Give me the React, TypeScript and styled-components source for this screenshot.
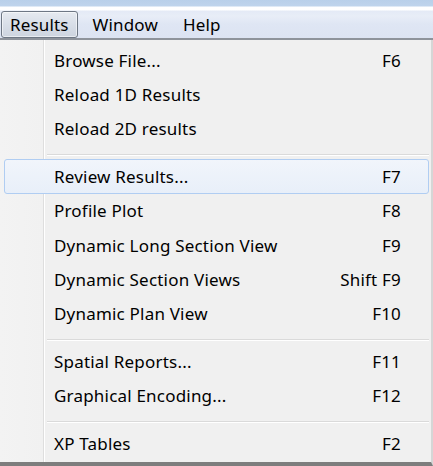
import React from "react";
import styled, { createGlobalStyle } from "styled-components";

const GlobalStyle = createGlobalStyle`
  html, body {
    margin: 0;
    padding: 0;
    background: #f0f0f0;
    overflow: hidden;
  }
  body {
    font-family: "Noto Sans", "Open Sans", "DejaVu Sans", sans-serif;
    color: #000;
  }
`;

const Screen = styled.div`
  width: 433px;
  height: 466px;
  display: flex;
  flex-direction: column;
  overflow: hidden;
  background: #f0f0f0;
`;

const MenuBar = styled.div`
  height: 40px;
  flex: none;
  display: flex;
  align-items: flex-end;
  gap: 5px;
  padding: 0 0 0 1px;
  box-sizing: border-box;
  border-bottom: 2px solid #8e939b;
  background: linear-gradient(
    to bottom,
    #b9d0ea 0px,
    #bfd4ec 6px,
    #ffffff 7px,
    #ffffff 10px,
    #e4eaf6 11px,
    #e8edf7 16px,
    #dfe6f4 24px,
    #dce3f2 38px
  );
`;

const MenuBarItem = styled.div<{ $active?: boolean }>`
  height: 27px;
  display: flex;
  align-items: center;
  padding: 0 ${(p) => (p.$active ? "8px" : "9px")} 1px;
  font-size: 17px;
  letter-spacing: 0.15px;
  box-sizing: border-box;
  border-radius: 3px;
  border: 1px solid ${(p) => (p.$active ? "#6e7784" : "transparent")};
  background: ${(p) =>
    p.$active
      ? "linear-gradient(to bottom, #e6eaf0 0%, #d8dee8 50%, #cdd4df 100%)"
      : "transparent"};
  box-shadow: ${(p) => (p.$active ? "inset 0 0 0 1px rgba(255,255,255,0.55)" : "none")};
`;

const Dropdown = styled.div`
  flex: 1;
  display: flex;
  flex-direction: column;
  padding-top: 3px;
  box-sizing: border-box;
  border-right: 2px solid #d6d6d6;
  border-bottom: 4px solid #7d7d7d;
  background: linear-gradient(
    to right,
    #f3f3f3 0px,
    #f1f1f1 43px,
    #dedede 43px,
    #dedede 44px,
    #ffffff 44px,
    #ffffff 45px,
    #f0f0f0 45px
  );
`;

const Item = styled.div<{ $highlighted?: boolean }>`
  height: 34.4px;
  flex: none;
  margin: 0 2px 0 4px;
  box-sizing: border-box;
  display: grid;
  grid-template-columns: 49px 1fr auto;
  align-items: center;
  padding-right: 27px;
  font-size: 17px;
  letter-spacing: 0.2px;
  border-radius: 3px;
  border: 1px solid ${(p) => (p.$highlighted ? "#b0cdf2" : "transparent")};
  background: ${(p) =>
    p.$highlighted
      ? "linear-gradient(to bottom, #f1f5fb 0%, #e8eff9 100%)"
      : "transparent"};
`;

const Label = styled.span`
  grid-column: 2;
  white-space: nowrap;
`;

const Shortcut = styled.span`
  grid-column: 3;
  text-align: right;
  white-space: nowrap;
`;

const Separator = styled.div`
  height: 13px;
  flex: none;
  box-sizing: border-box;
  padding: 8px 2px 0 47px;
  &::before {
    content: "";
    display: block;
    height: 1px;
    background: #dadada;
    box-shadow: 0 1px 0 #ffffff;
  }
`;

type Entry =
  | { kind: "item"; label: string; shortcut?: string; highlighted?: boolean }
  | { kind: "sep" };

const entries: Entry[] = [
  { kind: "item", label: "Browse File...", shortcut: "F6" },
  { kind: "item", label: "Reload 1D Results" },
  { kind: "item", label: "Reload 2D results" },
  { kind: "sep" },
  { kind: "item", label: "Review Results...", shortcut: "F7", highlighted: true },
  { kind: "item", label: "Profile Plot", shortcut: "F8" },
  { kind: "item", label: "Dynamic Long Section View", shortcut: "F9" },
  { kind: "item", label: "Dynamic Section Views", shortcut: "Shift F9" },
  { kind: "item", label: "Dynamic Plan View", shortcut: "F10" },
  { kind: "sep" },
  { kind: "item", label: "Spatial Reports...", shortcut: "F11" },
  { kind: "item", label: "Graphical Encoding...", shortcut: "F12" },
  { kind: "sep" },
  { kind: "item", label: "XP Tables", shortcut: "F2" },
];

export default function App() {
  return (
    <>
      <GlobalStyle />
      <Screen>
        <MenuBar>
          <MenuBarItem $active>Results</MenuBarItem>
          <MenuBarItem>Window</MenuBarItem>
          <MenuBarItem>Help</MenuBarItem>
        </MenuBar>
        <Dropdown>
          {entries.map((e, i) =>
            e.kind === "sep" ? (
              <Separator key={i} />
            ) : (
              <Item key={i} $highlighted={e.highlighted}>
                <Label>{e.label}</Label>
                <Shortcut>{e.shortcut ?? ""}</Shortcut>
              </Item>
            )
          )}
        </Dropdown>
      </Screen>
    </>
  );
}
